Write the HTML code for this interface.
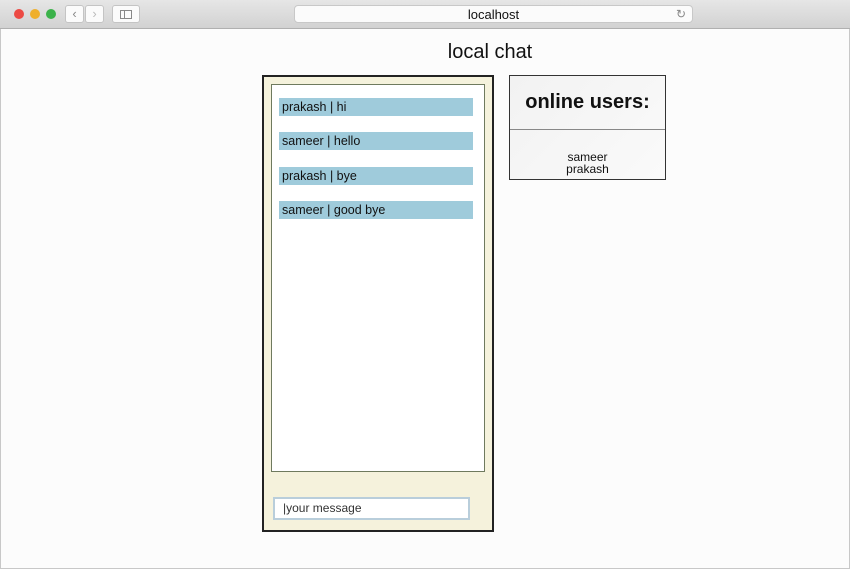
<!DOCTYPE html>
<html><head><meta charset="utf-8"><style>
*{margin:0;padding:0;box-sizing:border-box}
body{width:850px;height:569px;background:#fcfcfc;font-family:"Liberation Sans",Arial,sans-serif;position:relative;overflow:hidden}
.abs{position:absolute}
.bar{left:0;top:0;width:850px;height:29px;background:linear-gradient(#e6e6e6,#d2d2d2);border-bottom:1px solid #b0b0b0}
.dot{width:10px;height:10px;border-radius:50%;top:9px}
.btn{top:5px;height:18px;background:#fbfbfb;border:1px solid #c4c4c4;border-radius:3px;color:#888;font-size:13px;text-align:center;line-height:16px}
.url{left:294px;top:5px;width:399px;height:18px;background:#fbfbfb;border:1px solid #c8c8c8;border-radius:4px;font-size:13px;text-align:center;line-height:17px;color:#111}
.msg{left:279px;width:194px;height:18px;background:#9fcbdb;font-size:12.5px;line-height:18px;padding-left:3px;color:#111}
</style></head><body>
<div class="abs" style="left:0;top:0;width:850px;height:569px;border:1px solid #c8c8c8"></div>
<div class="abs bar"></div>
<div class="abs dot" style="left:14px;background:#ec4a44"></div>
<div class="abs dot" style="left:30px;background:#efaf2c"></div>
<div class="abs dot" style="left:46px;background:#3bb24a"></div>
<div class="abs btn" style="left:65px;width:19px">‹</div>
<div class="abs btn" style="left:85px;width:19px;color:#bbb">›</div>
<div class="abs btn" style="left:112px;width:28px"><span style="display:inline-block;width:12px;height:9px;border:1px solid #888;margin-top:4px;position:relative"><span style="position:absolute;left:3px;top:0;width:1px;height:7px;background:#888"></span></span></div>
<div class="abs url">localhost<span style="position:absolute;right:6px;top:0;color:#888;font-size:12px">↻</span></div>
<div class="abs" style="left:0;top:41px;width:980px;text-align:center;font-size:20px;color:#111">local chat</div>
<div class="abs" style="left:262px;top:75px;width:232px;height:457px;background:#f5f2dc;border:2px solid #222"></div>
<div class="abs" style="left:271px;top:84px;width:214px;height:388px;background:#fff;border:1px solid #6f7a5e"></div>
<div class="abs msg" style="top:98px">prakash | hi</div>
<div class="abs msg" style="top:132px">sameer | hello</div>
<div class="abs msg" style="top:167px">prakash | bye</div>
<div class="abs msg" style="top:201px">sameer | good bye</div>
<div class="abs" style="left:273px;top:497px;width:197px;height:23px;background:#fff;border:2px solid #b9cedb;font-size:12px;line-height:19px;padding-left:8px;color:#333">|your message</div>
<div class="abs" style="left:509px;top:75px;width:157px;height:105px;border:1px solid #333;background:linear-gradient(135deg,#f2f2f2,#fafafa)"></div>
<div class="abs" style="left:510px;top:129px;width:155px;height:1px;background:#888"></div>
<div class="abs" style="left:509px;top:91px;width:157px;text-align:center;font-size:20px;font-weight:bold;color:#111">online users:</div>
<div class="abs" style="left:509px;top:151px;width:157px;text-align:center;font-size:12px;line-height:12px;color:#111">sameer<br>prakash</div>
</body></html>
